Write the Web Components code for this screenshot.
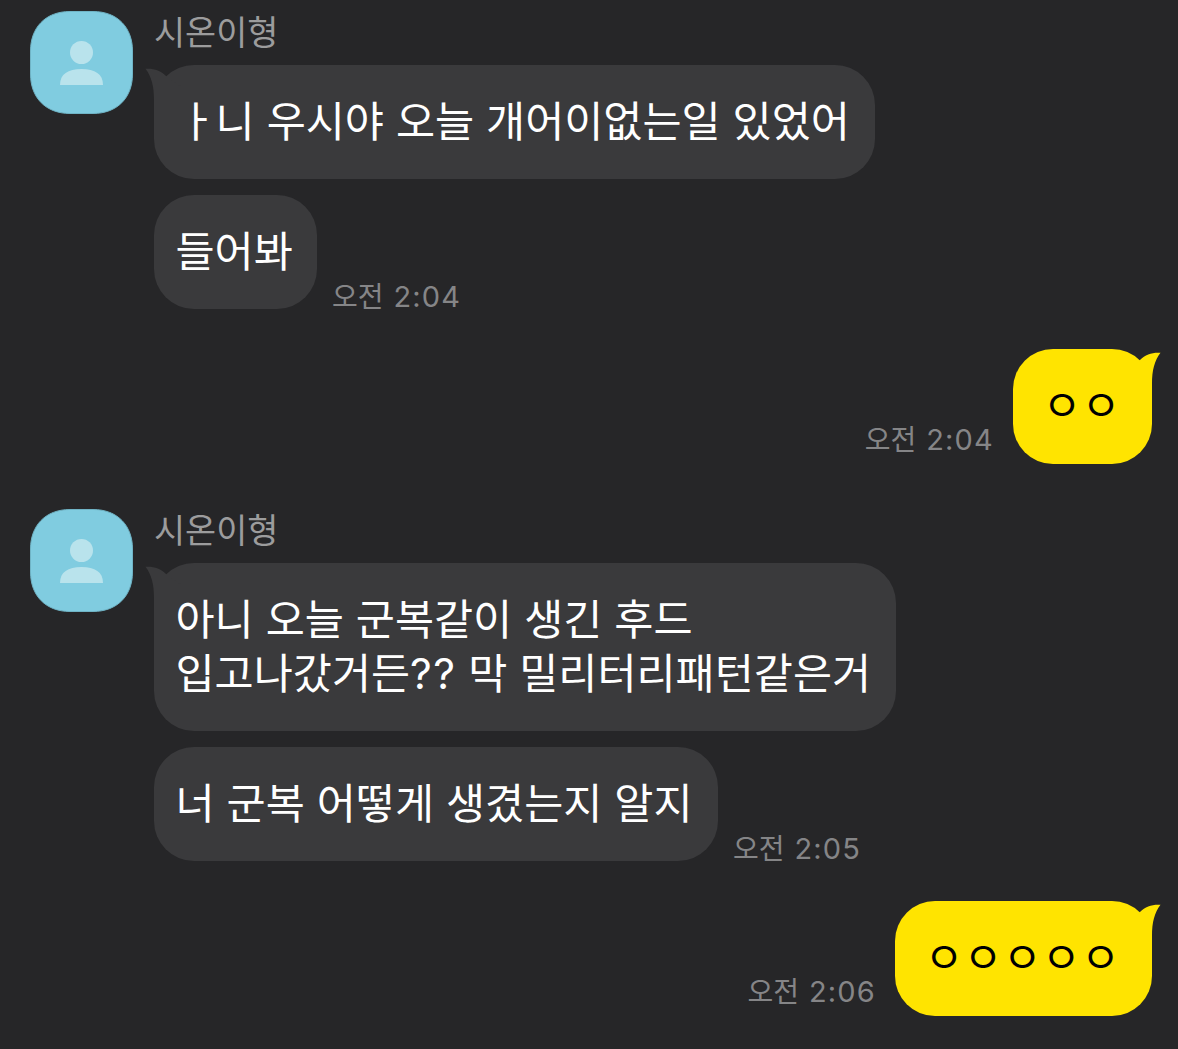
<!DOCTYPE html>
<html lang="ko">
<head>
<meta charset="utf-8">
<title>시온이형</title>
<style>
  html, body {
    margin: 0;
    background: #262628;
  }
  body {
    width: 1178px;
    height: 1049px;
    overflow: hidden;
    font-family: Inter, "Noto Sans CJK KR", sans-serif;
  }
  .jamo {
    letter-spacing: -1px;
  }
  .marks {
    letter-spacing: 1.3px;
  }
</style>
</head>
<body>
<chat-room>
  <chat-group name="시온이형">
    <chat-message width="721" tail style="--indent: 2px"><span class="jamo">ㅏ</span>니 우시야 오늘 개어이없는일 있었어</chat-message>
    <chat-message width="163" time="오전 2:04">들어봐</chat-message>
  </chat-group>
  <chat-group mine>
    <chat-message mine width="139" tail time="오전 2:04">ㅇㅇ</chat-message>
  </chat-group>
  <chat-group name="시온이형">
    <chat-message width="742" tail>아니 오늘 군복같이 생긴 후드<br>입고나갔거든<span class="marks">??</span> 막 밀리터리패턴같은거</chat-message>
    <chat-message width="564" time="오전 2:05">너 군복 어떻게 생겼는지 알지</chat-message>
  </chat-group>
  <chat-group mine>
    <chat-message mine width="257" tail time="오전 2:06">ㅇㅇㅇㅇㅇ</chat-message>
  </chat-group>
</chat-room>

<script>
class ChatRoom extends HTMLElement {
  constructor() {
    super();
    this.attachShadow({ mode: "open" });
    this.shadowRoot.innerHTML = `
      <style>
        :host {
          display: flex;
          flex-direction: column;
          box-sizing: border-box;
          height: 1049px;
          padding: 11px 26px 0 30px;
          background: #262628;
        }
      </style>
      <slot></slot>`;
  }
}

class ChatAvatar extends HTMLElement {
  constructor() {
    super();
    this.attachShadow({ mode: "open" });
    this.shadowRoot.innerHTML = `
      <style>
        :host {
          display: block;
          width: 103px;
          height: 103px;
        }
        svg {
          display: block;
        }
      </style>
      <svg width="103" height="103" viewBox="0 0 103 103">
        <path d="M40 .5H63C88 .5 102.500 17 102.500 40V63C102.500 87 87 102.500 63 102.500H40C16 102.500 .5 87 .5 63V40C.5 17 15 .5 40 .5Z" fill="#80cce0" stroke="#70b4c6"/>
        <circle cx="51.500" cy="41.500" r="11.500" fill="#b9e3ec"/>
        <path d="M30 74C30 63 38 58 51.500 58S73 63 73 74Z" fill="#b9e3ec"/>
      </svg>`;
  }
}

class ChatGroup extends HTMLElement {
  constructor() {
    super();
    this.attachShadow({ mode: "open" });
    this.shadowRoot.innerHTML = `
      <style>
        :host {
          display: flex;
          flex: none;
          gap: 21px;
          margin-bottom: 39.5px;
        }
        :host([mine]) {
          justify-content: flex-end;
          margin-bottom: 45.5px;
        }
        :host([mine]) chat-avatar,
        :host([mine]) .name {
          display: none;
        }
        .name {
          height: 54px;
          font: 33.8px/39px "Noto Sans CJK KR", sans-serif;
          color: #9c9c9d;
        }
        .list {
          display: flex;
          flex-direction: column;
          gap: 16px;
        }
      </style>
      <chat-avatar></chat-avatar>
      <div>
        <div class="name"></div>
        <div class="list"><slot></slot></div>
      </div>`;
  }

  connectedCallback() {
    this.shadowRoot.querySelector(".name").textContent =
      this.getAttribute("name") || "";
  }
}

class ChatMessage extends HTMLElement {
  constructor() {
    super();
    this.attachShadow({ mode: "open" });
    this.shadowRoot.innerHTML = `
      <style>
        :host {
          display: flex;
          align-items: flex-end;
          gap: 15px;
        }
        :host([mine]) {
          flex-direction: row-reverse;
          gap: 19px;
        }
        .bubble {
          position: relative;
          box-sizing: border-box;
          min-height: 114px;
          padding: 30px 0 30px calc(21.5px + var(--indent, 0px));
          border-radius: 40px;
          background: #3a3a3c;
          color: #fff;
          font: 42.5px/54px Inter, "Noto Sans CJK KR", sans-serif;
          word-spacing: 0;
          white-space: nowrap;
        }
        :host([mine]) .bubble {
          min-height: 115px;
          padding-left: 29.5px;
          background: #ffe400;
          color: #000;
        }
        .tail {
          display: none;
          position: absolute;
          top: 3px;
          left: -9px;
          fill: #3a3a3c;
        }
        :host([tail]) .tail {
          display: block;
        }
        :host([mine]) .tail {
          left: auto;
          right: -9px;
          transform: scaleX(-1);
          fill: #ffe400;
        }
        .time {
          font-size: 28px;
          line-height: 22px;
          margin-bottom: 1px;
          word-spacing: 2px;
          color: #858587;
          white-space: nowrap;
        }
        :host([mine]) .time {
          margin-bottom: 13px;
        }
        .clock {
          font-size: 29px;
          letter-spacing: 1.2px;
        }
      </style>
      <div class="bubble">
        <svg class="tail" width="40" height="40" viewBox="0 0 40 40">
          <path d="M.5 .8C9 .3 15.500 2.500 21 8L38 20V38H9V32C9 18 6.500 9 .5 .8Z"/>
        </svg>
        <slot></slot>
      </div>
      <div class="time"></div>`;
  }

  connectedCallback() {
    this.shadowRoot.querySelector(".bubble").style.width =
      this.getAttribute("width") + "px";
    const time = this.shadowRoot.querySelector(".time");
    if (this.hasAttribute("time")) {
      const [meridiem, clock] = this.getAttribute("time").split(" ");
      time.innerHTML = `${meridiem} <span class="clock">${clock}</span>`;
    } else {
      time.remove();
    }
  }
}

customElements.define("chat-room", ChatRoom);
customElements.define("chat-avatar", ChatAvatar);
customElements.define("chat-group", ChatGroup);
customElements.define("chat-message", ChatMessage);
</script>
</body>
</html>
